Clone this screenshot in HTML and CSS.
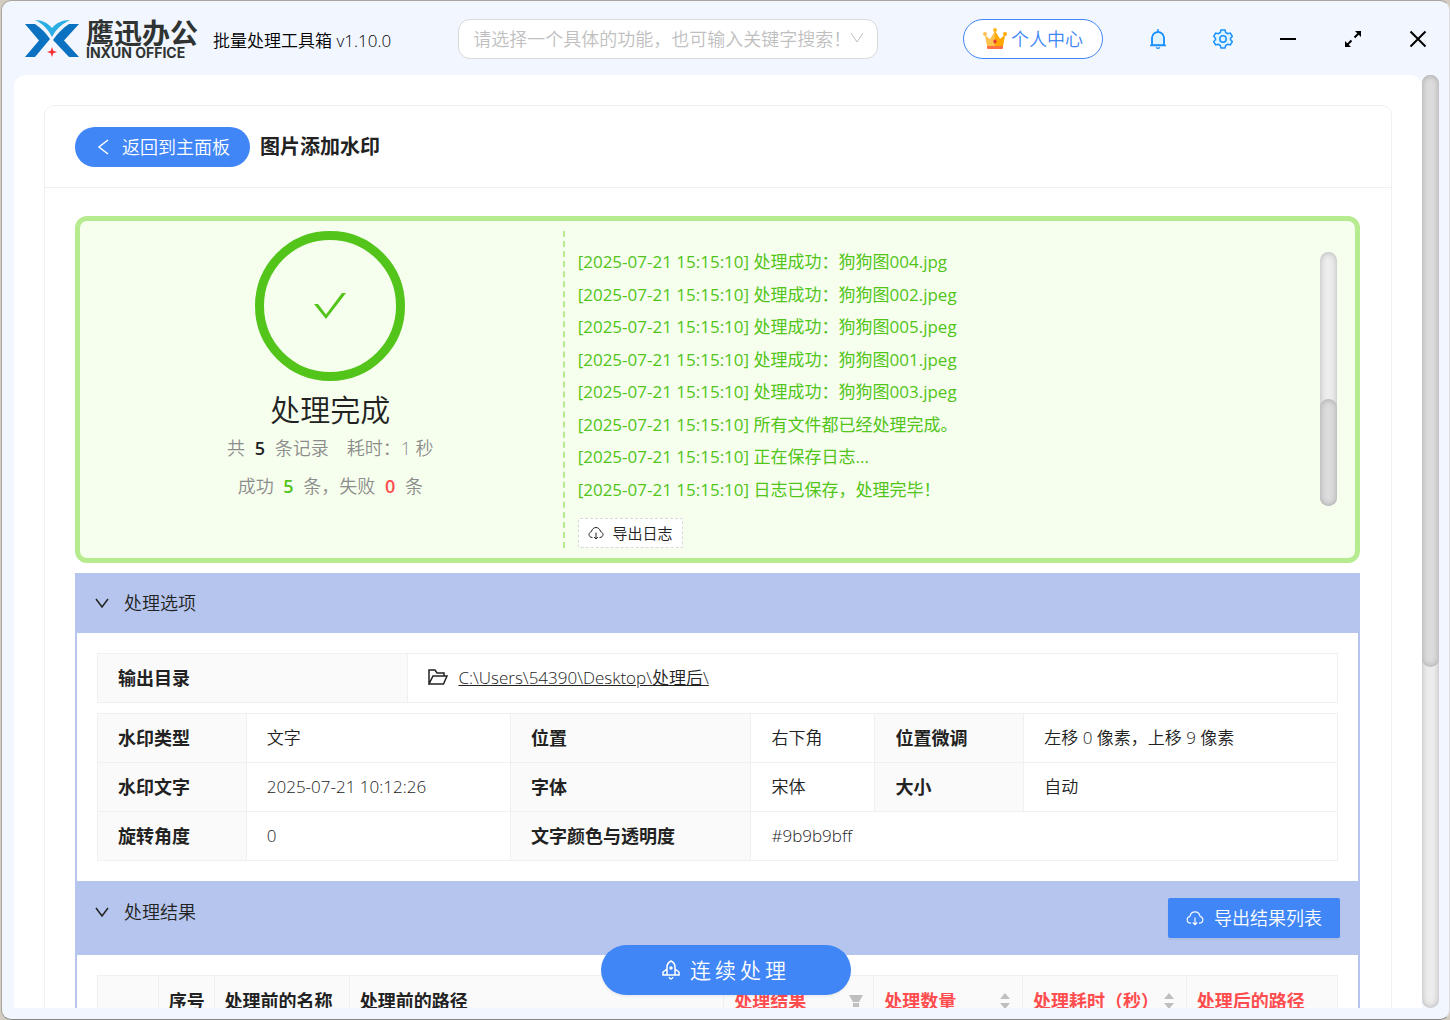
FILE: index.html
```html
<!DOCTYPE html>
<html lang="zh-CN">
<head>
  <meta charset="UTF-8">
  <meta name="viewport" content="width=device-width, initial-scale=1.0">
  <title>鹰迅办公 批量处理工具箱</title>
  <link rel="stylesheet" href="styles.css">
</head>
<body>
  <div class="window">
    <header class="topbar">
      <div class="logo">
        <svg class="logo-mark" viewBox="0 0 54 38" aria-hidden="true">
          <path fill="#0a72c0" d="M0 4h10c6 4 11 9 15 15L10 37H0l14-16.500z"/>
          <path fill="#0a72c0" d="M54 4H44c-6 4-12 10-16 16l16 17h10L39 20.500z"/>
          <path fill="#2aaee4" d="M10 0c7 0 13 3 17 8 4-5 10-8 18-8-8 4-14 9-18 17C23 9 18 4 10 0z"/>
          <path fill="#f5333a" d="M27 27l1.300 3.700L32 32l-3.700 1.300L27 37l-1.300-3.700L22 32l3.700-1.300z"/>
        </svg>
        <div class="logo-text">
          <strong>鹰迅办公</strong>
          <span>INXUN OFFICE</span>
        </div>
      </div>
      <span class="app-name">批量处理工具箱 v1.10.0</span>
      <div class="search">
        <select aria-label="搜索功能">
          <option>请选择一个具体的功能，也可输入关键字搜索！</option>
        </select>
        <svg viewBox="0 0 14 14" aria-hidden="true"><path d="M1 2l6 9 6-9"/></svg>
      </div>
      <div class="actions">
        <button class="user-center" type="button">
          <svg viewBox="0 0 24 24" aria-hidden="true">
            <path fill="#fcc14e" d="M4 19L2 8l5 4 5-8 5 8 5-4-2 11z"/>
            <path fill="#ffa800" d="M12 4l5 8 5-4-2 11h-8z"/>
            <path fill="#ff7043" d="M4 19h16v2q0 1-1 1H5q-1 0-1-1z"/>
            <circle cx="12" cy="3" r="2" fill="#ffb820"/>
            <circle cx="2" cy="7" r="2" fill="#fcc14e"/>
            <circle cx="22" cy="7" r="2" fill="#ffa800"/>
            <path fill="#e53935" d="M12 12l2 2.500-2 2.500-2-2.500z"/>
          </svg>
          个人中心
        </button>
        <button class="tool blue" type="button" aria-label="通知">
          <svg viewBox="0 0 20 20"><path fill="#e0f4ff" d="M4 16V9a6 6 0 0 1 12 0v7z"/><path d="M2 16.500h16M4 16V9a6 6 0 0 1 12 0v7M10 3V0M8 18.500q2 1.500 4 0"/></svg>
        </button>
        <button class="tool blue" type="button" aria-label="设置">
          <svg viewBox="0 0 20 20"><path fill="#e0f4ff" d="M8 1h4l.7 2.500 2 1.200 2.600-.7 2 3.400L17.500 9.300v1.400l1.800 1.900-2 3.400-2.600-.7-2 1.200L12 19H8l-.7-2.500-2-1.200-2.600.7-2-3.400 1.800-1.900V9.300L.7 7.400l2-3.400 2.600.7 2-1.200z"/><circle cx="10" cy="10" r="3.200"/></svg>
        </button>
        <button class="tool" type="button" aria-label="最小化">
          <svg viewBox="0 0 20 20"><path d="M2 10h16"/></svg>
        </button>
        <button class="tool" type="button" aria-label="最大化">
          <svg viewBox="0 0 20 20"><path d="M16 4l-4.500 4.500M8.500 11.500L4 16"/><path class="solid" d="M12 2h6v6zM2 12v6h6z"/></svg>
        </button>
        <button class="tool" type="button" aria-label="关闭">
          <svg viewBox="0 0 20 20"><path d="M2.500 2.500l15 15M17.500 2.500l-15 15"/></svg>
        </button>
      </div>
    </header>

    <div class="viewport">
      <main class="page">
        <section class="card">
          <div class="card-head">
            <button class="back" type="button">
              <svg viewBox="0 0 16 16" aria-hidden="true"><path d="M13 1L4 8l9 7"/></svg>
              返回到主面板
            </button>
            <h1>图片添加水印</h1>
          </div>

          <div class="card-body">
            <div class="result">
              <div class="summary">
                <svg class="done" viewBox="0 0 150 150" aria-hidden="true">
                  <circle cx="75" cy="75" r="70.500"/>
                  <path d="M59 73h4l8 10.500L87 62h4L71 88z"/>
                </svg>
                <h2>处理完成</h2>
                <p class="first">共 <b>5</b> 条记录<span>耗时：1 秒</span></p>
                <p>成功 <b class="ok">5</b> 条，失败 <b class="fail">0</b> 条</p>
              </div>
              <div class="log">
                <div class="log-scroll">
                  <ul>
                    <li>[2025-07-21 15:15:10] 处理成功：狗狗图004.jpg</li>
                    <li>[2025-07-21 15:15:10] 处理成功：狗狗图002.jpeg</li>
                    <li>[2025-07-21 15:15:10] 处理成功：狗狗图005.jpeg</li>
                    <li>[2025-07-21 15:15:10] 处理成功：狗狗图001.jpeg</li>
                    <li>[2025-07-21 15:15:10] 处理成功：狗狗图003.jpeg</li>
                    <li>[2025-07-21 15:15:10] 所有文件都已经处理完成。</li>
                    <li>[2025-07-21 15:15:10] 正在保存日志...</li>
                    <li>[2025-07-21 15:15:10] 日志已保存，处理完毕！</li>
                  </ul>
                  <div class="track log-track"><div class="thumb"></div></div>
                </div>
                <button class="export-log" type="button">
                  <svg viewBox="0 0 16 16" aria-hidden="true"><path d="M4.500 12.500C2 12.500 1 11 1 9.500S2.200 7 3.500 6.500C4 4 6 2.500 8 2.500s4 1.500 4.500 4C13.800 7 15 8 15 9.500s-1 3-3.500 3M8 7.500V14M6 12l2 2 2-2"/></svg>
                  导出日志
                </button>
              </div>
            </div>

            <section class="panel">
              <div class="panel-head">
                <button class="toggle" type="button" aria-expanded="true">
                  <svg viewBox="0 0 14 14" aria-hidden="true"><path d="M1 3l6 8 6-8"/></svg>
                  处理选项
                </button>
              </div>
              <div class="panel-body">
                <table class="info output">
                  <tr>
                    <th scope="row">输出目录</th>
                    <td>
                      <svg class="folder" viewBox="0 0 20 16" aria-hidden="true"><path d="M1 15V1h6l2 3h7v3M1 15h14.500L19 7H5z"/></svg>
                      <a href="#">C:\Users\54390\Desktop\处理后\</a>
                    </td>
                  </tr>
                </table>
                <table class="info options">
                  <colgroup>
                    <col class="o1"><col class="o2"><col class="o3"><col class="o4"><col class="o5"><col class="o6">
                  </colgroup>
                  <tr>
                    <th scope="row">水印类型</th><td>文字</td>
                    <th scope="row">位置</th><td>右下角</td>
                    <th scope="row">位置微调</th><td>左移 0 像素，上移 9 像素</td>
                  </tr>
                  <tr>
                    <th scope="row">水印文字</th><td>2025-07-21 10:12:26</td>
                    <th scope="row">字体</th><td>宋体</td>
                    <th scope="row">大小</th><td>自动</td>
                  </tr>
                  <tr>
                    <th scope="row">旋转角度</th><td>0</td>
                    <th scope="row">文字颜色与透明度</th><td colspan="3">#9b9b9bff</td>
                  </tr>
                </table>
              </div>
            </section>

            <section class="panel">
              <div class="panel-head tall">
                <button class="toggle" type="button" aria-expanded="true">
                  <svg viewBox="0 0 14 14" aria-hidden="true"><path d="M1 3l6 8 6-8"/></svg>
                  处理结果
                </button>
                <button class="export-list" type="button">
                  <svg viewBox="0 0 16 16" aria-hidden="true"><path d="M4.500 12.500C2 12.500 1 11 1 9.500S2.200 7 3.500 6.500C4 4 6 2.500 8 2.500s4 1.500 4.500 4C13.800 7 15 8 15 9.500s-1 3-3.500 3M8 7.500V14M6 12l2 2 2-2"/></svg>
                  导出结果列表
                </button>
              </div>
              <div class="panel-body">
                <table class="list">
                  <colgroup>
                    <col class="c1"><col class="c2"><col class="c3"><col class="c4"><col class="c5"><col class="c6"><col class="c7"><col class="c8">
                  </colgroup>
                  <thead>
                    <tr>
                      <th></th>
                      <th>序号</th>
                      <th>处理前的名称</th>
                      <th>处理前的路径</th>
                      <th class="red"><div>处理结果<svg viewBox="0 0 14 14" aria-hidden="true"><path d="M0 1h14l-4 7H4zM4 9h6v4H4z"/></svg></div></th>
                      <th class="red"><div>处理数量<svg viewBox="0 0 14 16" aria-hidden="true"><path d="M2 6l5-6 5 6zM2 10h10l-5 6z"/></svg></div></th>
                      <th class="red"><div>处理耗时（秒）<svg viewBox="0 0 14 16" aria-hidden="true"><path d="M2 6l5-6 5 6zM2 10h10l-5 6z"/></svg></div></th>
                      <th class="red">处理后的路径</th>
                    </tr>
                  </thead>
                </table>
              </div>
            </section>
          </div>
        </section>
      </main>
      <div class="track page-track"><div class="thumb"></div></div>
    </div>

    <button class="again" type="button">
      <svg viewBox="0 0 20 20" aria-hidden="true"><path d="M6 15V7c0-3 2-5 4-6 2 1 4 3 4 6v8zM6 9l-4 3v3h4M14 9l4 3v3h-4M8 17q2 4 4 0"/><circle cx="10" cy="8" r="1"/></svg>
      <span>连续处理</span>
    </button>
  </div>
</body>
</html>
```
FILE: styles.css
```css
* { box-sizing: border-box; }
body {
  margin: 0;
  background: #d3ccc1;
  color: #222;
  font: 350 17px/26px "Open Sans", "Noto Sans CJK SC", sans-serif;
}
h1, h2, p, ul { margin: 0; padding: 0; }
button, select { font: inherit; color: inherit; }
button { display: flex; align-items: center; justify-content: center; border: 0; background: none; padding: 0; white-space: nowrap; cursor: pointer; }
svg { flex: none; fill: none; stroke: currentColor; }

.window {
  position: relative;
  display: flex;
  flex-direction: column;
  height: 100vh;
  margin-left: 1px;
  padding: 0 10px 11px 12px;
  background: #f2f6ff;
  border: 1px solid #aaa59f;
  border-right-color: #dcdde2;
  border-bottom-color: #888;
  border-radius: 10px;
}

/* top bar */
.topbar { flex: none; display: flex; align-items: center; height: 74px; padding: 2px 0 0 11px; color: #000; }
.logo { display: flex; align-items: center; gap: 7px; width: 188px; }
.logo-mark { width: 54px; height: 38px; stroke: none; }
.logo-text { color: #2f3432; }
.logo-text strong { display: block; font-family: "Noto Sans CJK SC", sans-serif; font-size: 28px; line-height: 28px; font-weight: 700; white-space: nowrap; }
.logo-text span { display: block; font-family: Inter, sans-serif; font-size: 14px; line-height: 14px; font-weight: 700; }
.app-name { padding-top: 4px; white-space: nowrap; }
.search { position: relative; width: 420px; margin-left: 67px; }
.search select {
  display: block;
  width: 100%;
  height: 40px;
  padding: 0 26px 0 14px;
  appearance: none;
  border: 1px solid #d9d9d9;
  border-radius: 12px;
  background: #fff;
  color: #bfbfbf;
  font-size: 18px;
}
.search svg { position: absolute; right: 14px; top: 12px; width: 14px; height: 14px; color: #bfbfbf; }
.actions { display: flex; align-items: center; margin: 0 -11px 0 auto; }
.user-center { width: 140px; height: 40px; margin-right: 22px; gap: 4px; border: 1px solid #4086f7; border-radius: 20px; background: #fff; color: #4086f7; font-size: 18px; }
.user-center svg { width: 24px; height: 24px; stroke: none; }
.tool { width: 65px; height: 40px; }
.tool svg { width: 20px; height: 20px; stroke-width: 2; }
.tool .solid { fill: currentColor; stroke: none; }
.blue { color: #1890ff; }
.blue svg { stroke-width: 1.5; }

/* scrolling area */
.viewport { flex: 1; display: flex; min-height: 0; }
.page { flex: 1; padding: 30px; overflow: hidden; background: #fff; border-radius: 12px 12px 0 0; }
.track { flex: none; width: 17px; border-radius: 9px; background: #ededed; box-shadow: inset 0 0 6px rgba(0, 0, 0, .25); }
.thumb { border-radius: 9px; background: #dcdcdc; box-shadow: inset 0 0 6px rgba(0, 0, 0, .25); }
.page-track .thumb { height: 63.4%; }

.card { border: 1px solid #f0f0f0; border-radius: 10px; }
.card-head { display: flex; align-items: center; gap: 10px; height: 82px; padding: 0 30px; border-bottom: 1px solid #f0f0f0; }
.card-head h1 { font-size: 20px; font-weight: 700; }
.back { width: 175px; height: 40px; gap: 11px; border-radius: 20px; background: #4086f7; color: #fff; font-size: 18px; }
.back svg { width: 16px; height: 16px; stroke-width: 1.5; }
.card-body { padding: 28px 31px 100px 30px; }

/* result block */
.result { display: grid; grid-template-columns: 3fr 5fr; padding: 10px 18px; border: 5px solid #b7eb8f; border-radius: 12px; background: #f6ffed; }
.summary { text-align: center; color: #8c8c8c; }
.done { display: block; width: 150px; height: 150px; margin: 0 auto 10px; }
.done circle { stroke: #52c41a; stroke-width: 9; }
.done path { fill: #52c41a; stroke: none; }
.summary h2 { color: #222; font-size: 30px; line-height: 38px; font-weight: 350; }
.summary p { font-size: 18px; line-height: 38px; }
.summary b { margin: 0 5px; font-weight: 600; color: #222; }
.summary span { margin-left: 18px; }
.summary .ok { color: #52c41a; }
.summary .fail { color: #ff4d4f; }
.log { padding: 15px 0 0 13px; border-left: 2px dashed #b7eb8f; }
.log-scroll { display: flex; justify-content: space-between; margin-bottom: 12px; }
.log ul { display: grid; grid-auto-rows: 1fr; align-items: center; height: 260px; list-style: none; color: #52c41a; font-weight: 400; }
.log-track { display: flex; flex-direction: column; justify-content: flex-end; margin-top: 6px; }
.log-track .thumb { height: 42%; }
.export-log { width: 105px; height: 30px; gap: 9px; border: 1px dashed #d9d9d9; border-radius: 2px; background: #fff; font-size: 15px; }
.export-log svg { width: 16px; height: 16px; }

/* panels */
.result + .panel { margin-top: 10px; }
.panel-head { display: flex; align-items: center; justify-content: space-between; height: 60px; padding: 0 20px; background: #b6c5ed; }
.panel-head.tall { height: 74px; }
.tall .toggle { margin-bottom: 12px; }
.toggle { gap: 15px; font-size: 18px; }
.toggle svg { width: 14px; height: 14px; stroke-width: 1.5; }
.export-list { width: 172px; height: 40px; gap: 10px; border-radius: 2px; background: #4086f7; color: #fff; font-size: 18px; box-shadow: 0 2px 2px rgba(0, 0, 0, .05); }
.export-list svg { width: 18px; height: 18px; }
.panel-body { padding: 20px; border: solid #b6c5ed; border-width: 0 2px; }

table { width: 100%; table-layout: fixed; border-collapse: collapse; text-align: left; }
.info th, .info td { height: 49px; padding: 0 20px; border: 1px solid #f0f0f0; }
.info th, .list th { background: #fafafa; font-size: 18px; font-weight: 700; white-space: nowrap; }
.output { margin-bottom: 10px; }
.output th { width: 25%; }
.output a { color: inherit; }
.folder { width: 20px; height: 16px; margin-right: 6px; vertical-align: -1px; stroke-width: 1.5; }
.o1 { width: 12%; }
.o2 { width: 21.3%; }
.o3 { width: 19.4%; }
.o4 { width: 10%; }
.o5 { width: 12%; }
.o6 { width: 25.3%; }

.list th { height: 50px; padding: 0 10px; border: 1px solid #f0f0f0; }
.list th.red { color: #ff4d4f; }
.list th div { display: flex; align-items: center; justify-content: space-between; }
.list svg { width: 14px; height: 16px; fill: #bfbfbf; stroke: none; }
.c1 { width: 4.9%; }
.c2 { width: 4.5%; }
.c3 { width: 10.9%; }
.c4 { width: 30.2%; }
.c5 { width: 12.1%; }
.c6 { width: 12%; }
.c7 { width: 13.2%; }
.c8 { width: 12.2%; }

/* floating button over the list */
.again {
  position: absolute;
  left: 50%;
  bottom: 24px;
  transform: translateX(-50%);
  width: 250px;
  height: 50px;
  gap: 9px;
  border-radius: 25px;
  background: #4086f7;
  color: #fff;
  font-size: 21px;
  box-shadow: 0 2px 2px rgba(0, 0, 0, .05);
}
.again svg { width: 20px; height: 20px; stroke-width: 1.5; }
.again span { letter-spacing: 4px; }
```
